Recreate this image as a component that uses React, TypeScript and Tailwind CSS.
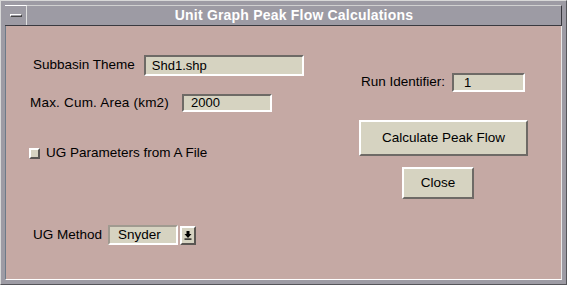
const bg = "bg-[#c5a9a4]";

function Sunken({ w, h, text, pad = "pl-[10px]" }: { w: string; h: string; text: string; pad?: string }) {
  return (
    <div
      className={`${w} ${h} ${pad} flex items-center bg-[#d6d3c1] border-2 border-t-[#6e6a66] border-l-[#6e6a66] border-b-white border-r-white text-[13px] text-black`}
    >
      {text}
    </div>
  );
}

function Raised({ w, h, text }: { w: string; h: string; text: string }) {
  return (
    <div
      className={`${w} ${h} flex items-center justify-center bg-[#d6d3c1] border-2 border-t-white border-l-white border-b-[#6e6a66] border-r-[#6e6a66] text-[13.5px] text-black`}
    >
      {text}
    </div>
  );
}

export default function App() {
  return (
    <div
      className="w-[567px] h-[285px] bg-[#9d9ba4] flex flex-col p-[4px] pb-[4px] border border-t-[#d8d8d8] border-l-[#d8d8d8] border-b-[#55555a] border-r-[#55555a]"
      style={{ fontFamily: '"Liberation Sans", Arial, sans-serif' }}
    >
      {/* title bar */}
      <div className="h-[21px] flex shrink-0 border-b border-b-[#3a3a40]">
        <div className="w-[22px] h-full flex items-center justify-center border-r border-r-[#e0e0e0] border-t border-t-white">
          <div className="w-[12px] h-[3px] border border-t-white border-l-white border-b-[#444] border-r-[#444]" />
        </div>
        <div className="flex-1 flex items-center justify-center text-white font-bold text-[14px] tracking-[0.2px] border-t border-t-[#d0d0d0] border-r border-r-[#3a3a40]">
          Unit Graph Peak Flow Calculations
        </div>
      </div>

      {/* content */}
      <div className={`flex-1 ${bg} flex border-l border-l-[#6d7a88] border-r border-r-[#e8e8e8] border-b border-b-white`}>
        {/* left column */}
        <div className="w-[329px] pl-[25px] flex flex-col">
          <div className="mt-[29px] flex items-center h-[21px]">
            <span className="ml-[2px] text-[13.5px] text-black">Subbasin Theme</span>
            <div className="ml-[9px]">
              <Sunken w="w-[160px]" h="h-[21px]" text="Shd1.shp" pad="pl-[6px]" />
            </div>
          </div>
          <div className="mt-[18px] flex items-center h-[18px]">
            <span className="-ml-[1px] text-[13.5px] text-black tracking-[0.2px]">Max. Cum. Area (km2)</span>
            <div className="ml-[13px]">
              <Sunken w="w-[90px]" h="h-[18px]" text="2000" pad="pl-[7px]" />
            </div>
          </div>
          <div className="mt-[34px] -ml-[2px] flex items-center h-[14px]">
            <div className="w-[11px] h-[11px] bg-[#d6d3c1] border-2 border-t-white border-l-white border-b-[#5a5652] border-r-[#5a5652]" />
            <span className="ml-[6px] text-[13.5px] text-black">UG Parameters from A File</span>
          </div>
          <div className="mt-[65px] flex items-center h-[20px]">
            <span className="ml-[2px] text-[13.5px] text-black">UG Method</span>
            <div className="ml-[6px] w-[70px] h-[20px] pl-[8px] flex items-center bg-[#d6d3c1] border-2 border-t-[#a09a90] border-l-[#a09a90] border-b-white border-r-white text-[13.5px] text-black">
              Snyder
            </div>
            <div className="ml-[2px] w-[16px] h-[19px] flex items-center justify-center bg-[#d6d3c1] border-2 border-t-white border-l-white border-b-[#5a5652] border-r-[#5a5652]">
              <svg width="8" height="10" viewBox="0 0 8 10">
                <path d="M4 8 L0.5 4 H2.5 V1 H5.5 V4 H7.5 Z" fill="#000" />
                <rect x="0.5" y="8.5" width="7" height="1.2" fill="#000" />
              </svg>
            </div>
          </div>
        </div>

        {/* right column */}
        <div className="flex-1 pl-[24px] flex flex-col">
          <div className="mt-[47px] flex items-center h-[19px]">
            <span className="ml-[2px] text-[13.5px] text-black">Run Identifier:</span>
            <div className="ml-[7px]">
              <Sunken w="w-[73px]" h="h-[19px]" text="1" pad="pl-[10px]" />
            </div>
          </div>
          <div className="mt-[28px]">
            <Raised w="w-[169px]" h="h-[36px]" text="Calculate Peak Flow" />
          </div>
          <div className="mt-[11px] ml-[43px]">
            <Raised w="w-[72px]" h="h-[32px]" text="Close" />
          </div>
        </div>
      </div>
    </div>
  );
}
